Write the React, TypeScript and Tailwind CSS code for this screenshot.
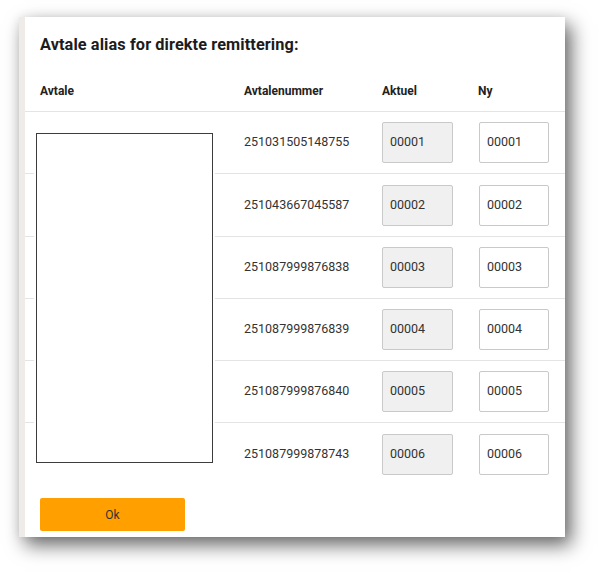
import React from "react";

const rows = [
  { nr: "251031505148755", a: "00001", h: "h-[62px]" },
  { nr: "251043667045587", a: "00002", h: "h-[63px]" },
  { nr: "251087999876838", a: "00003", h: "h-[62px]" },
  { nr: "251087999876839", a: "00004", h: "h-[62px]" },
  { nr: "251087999876840", a: "00005", h: "h-[62px]" },
  { nr: "251087999878743", a: "00006", h: "h-[62px]" },
];

export default function App() {
  return (
    <div
      className="w-[600px] h-[581px] bg-white pt-[17px] pl-[19px]"
      style={{ fontFamily: "Roboto, 'Noto Sans', sans-serif" }}
    >
      <div className="relative w-[546px] h-[520px] bg-white border-l-[6px] border-[#efebe8] shadow-[6px_8px_18px_rgba(0,0,0,0.6),0_0_10px_rgba(0,0,0,0.06)] flex flex-col">
        <div className="pl-[15px] pt-[18px] h-[38px] text-[16.3px] leading-[20px] font-bold text-[#1c1c1c] tracking-[0.1px]">
          Avtale alias for direkte remittering:
        </div>
        <div className="mt-[16px] h-[41px] flex items-center border-b border-[#e4e4e4] text-[12px] font-bold text-[#222]">
          <div className="w-[219px] pl-[15px]">Avtale</div>
          <div className="w-[138px]">Avtalenummer</div>
          <div className="w-[96px]">Aktuel</div>
          <div>Ny</div>
        </div>
        <div className="relative">
          {rows.map((r, i) => (
            <div
              key={r.nr}
              className={
                r.h +
                " flex items-center text-[12.5px] text-[#333] " +
                (i < rows.length - 1 ? "border-b border-[#e4e4e4]" : "")
              }
            >
              <div className="w-[219px]" />
              <div className="w-[138px]">{r.nr}</div>
              <div className="w-[97px]">
                <div className="w-[71px] h-[41px] flex items-center pl-[7px] bg-[#f0f0f0] border border-[#c9c9c9] rounded-[2px]">
                  {r.a}
                </div>
              </div>
              <div className="w-[70px] h-[41px] flex items-center pl-[7px] bg-white border border-[#c9c9c9] rounded-[2px]">
                {r.a}
              </div>
            </div>
          ))}
          <div className="absolute left-[11px] top-[21px] w-[177px] h-[330px] bg-white border-[1.5px] border-[#3c3c3c] shadow-[0_0_0_2px_white]" />
        </div>
        <div className="pl-[15px] mt-[13px]">
          <button className="w-[145px] h-[33px] bg-[#ffa000] rounded-[2px] text-[12px] text-[#333] flex items-center justify-center">
            Ok
          </button>
        </div>
      </div>
    </div>
  );
}
